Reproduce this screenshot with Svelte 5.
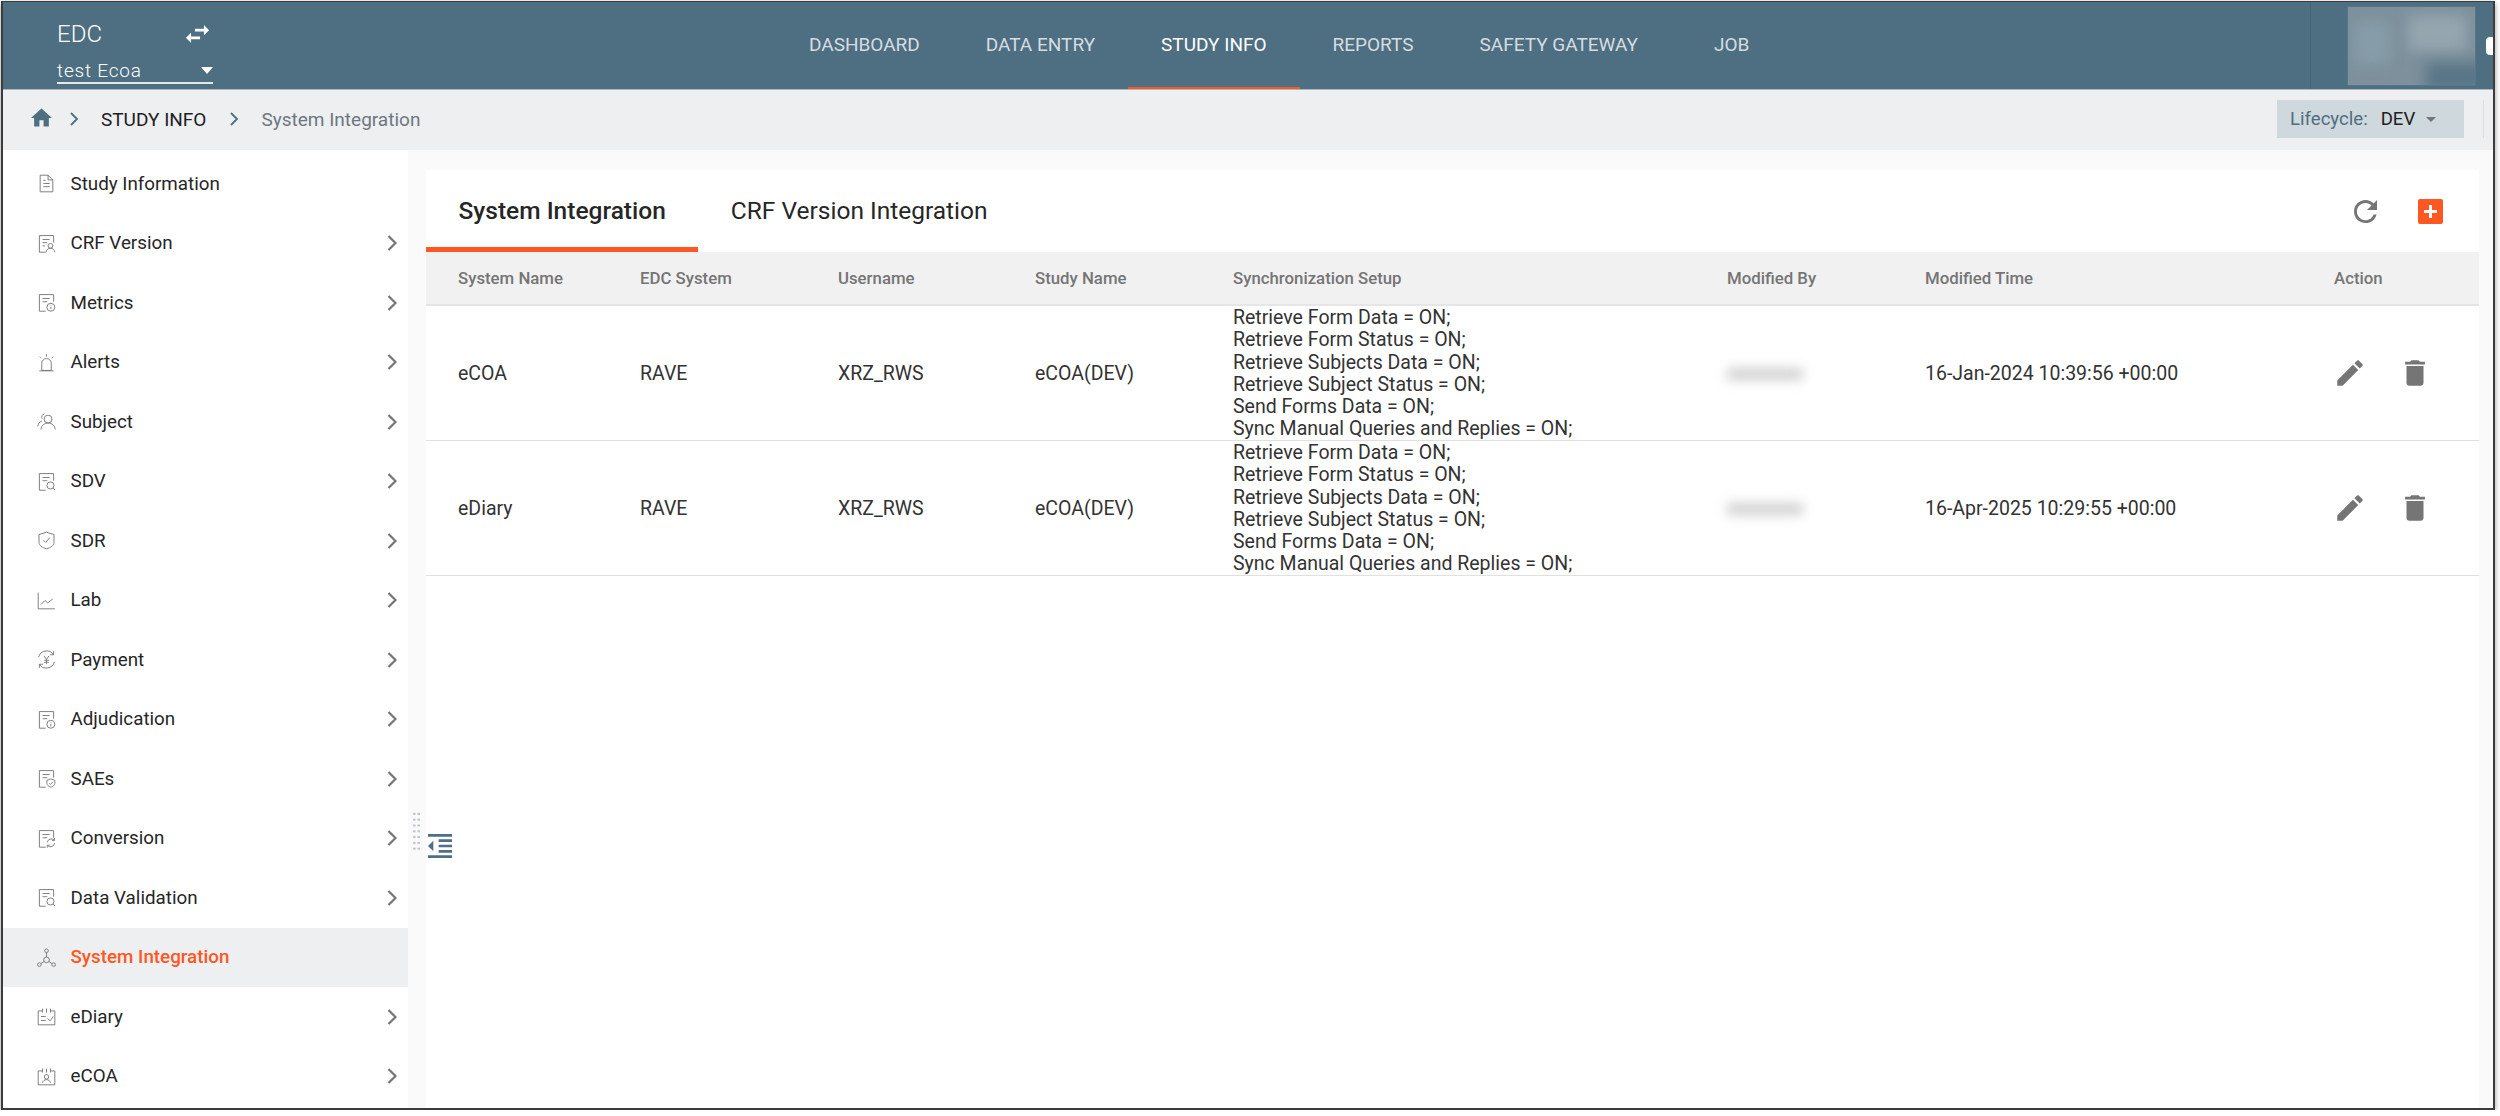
<script lang="ts">
	const navItems = ['Dashboard', 'Data Entry', 'Study Info', 'Reports', 'Safety Gateway', 'Job'];

	const menu = [
		{ label: 'Study Information', icon: 'doc', arrow: false },
		{ label: 'CRF Version', icon: 'crf', arrow: true },
		{ label: 'Metrics', icon: 'metrics', arrow: true },
		{ label: 'Alerts', icon: 'alerts', arrow: true },
		{ label: 'Subject', icon: 'subject', arrow: true },
		{ label: 'SDV', icon: 'search', arrow: true },
		{ label: 'SDR', icon: 'shield', arrow: true },
		{ label: 'Lab', icon: 'lab', arrow: true },
		{ label: 'Payment', icon: 'payment', arrow: true },
		{ label: 'Adjudication', icon: 'metrics', arrow: true },
		{ label: 'SAEs', icon: 'saes', arrow: true },
		{ label: 'Conversion', icon: 'conversion', arrow: true },
		{ label: 'Data Validation', icon: 'search', arrow: true },
		{ label: 'System Integration', icon: 'nodes', arrow: false, active: true },
		{ label: 'eDiary', icon: 'diary', arrow: true },
		{ label: 'eCOA', icon: 'ecoa', arrow: true }
	];

	const columns = [
		'System Name',
		'EDC System',
		'Username',
		'Study Name',
		'Synchronization Setup',
		'Modified By',
		'Modified Time',
		'Action'
	];

	const syncLines = [
		'Retrieve Form Data = ON;',
		'Retrieve Form Status = ON;',
		'Retrieve Subjects Data = ON;',
		'Retrieve Subject Status = ON;',
		'Send Forms Data = ON;',
		'Sync Manual Queries and Replies = ON;'
	];

	const rows = [
		{ name: 'eCOA', edc: 'RAVE', user: 'XRZ_RWS', study: 'eCOA(DEV)', time: '16-Jan-2024 10:39:56 +00:00' },
		{ name: 'eDiary', edc: 'RAVE', user: 'XRZ_RWS', study: 'eCOA(DEV)', time: '16-Apr-2025 10:29:55 +00:00' }
	];

	const docIcons = ['crf', 'metrics', 'search', 'saes', 'conversion'];
</script>

<div class="window">
	<header class="topbar">
		<div class="study">
			<div class="study-top">
				<span class="edc">EDC</span>
				<svg class="swap" viewBox="3 5 18 14" aria-hidden="true">
					<path d="M6.99 11L3 15l3.99 4v-3H14v-2H6.99v-3zM21 9l-3.99-4v3H10v2h7.01v3L21 9z" />
				</svg>
			</div>
			<div class="study-select">
				<span>test Ecoa</span>
				<i class="select-caret"></i>
			</div>
		</div>
		<nav class="nav">
			{#each navItems as item}
				<span class="nav-item" class:current={item === 'Study Info'} class:last={item === 'Job'}>{item}</span>
			{/each}
		</nav>
		<div class="user">
			<div class="user-blur"><div class="blob b1"></div><div class="blob b2"></div><div class="blob b3"></div></div>
			<div class="user-edge"></div>
		</div>
	</header>

	<div class="crumbs">
		<svg class="home" viewBox="2 3 20 17" aria-hidden="true"><path d="M10 20v-6h4v6h5v-8h3L12 3 2 12h3v8z" /></svg>
		<svg class="crumb-arrow" viewBox="0 0 10 14" aria-hidden="true"><path d="M2 1l6 6-6 6" /></svg>
		<span class="crumb">STUDY INFO</span>
		<svg class="crumb-arrow" viewBox="0 0 10 14" aria-hidden="true"><path d="M2 1l6 6-6 6" /></svg>
		<span class="crumb muted">System Integration</span>
		<div class="lifecycle">
			<span class="lc-label">Lifecycle:</span>
			<span class="lc-value">DEV</span>
			<i class="lc-caret"></i>
		</div>
		<div class="crumb-divider"></div>
	</div>

	<div class="body">
		<aside class="sidebar">
			{#each menu as item}
				<div class="menu-item" class:active={item.active}>
					<svg class="menu-icon" viewBox="0 0 24 24" aria-hidden="true">
						{#if docIcons.includes(item.icon)}
							<path d="M21 11V2H3v21h8M7 7h9M7 11h6" />
						{/if}
						{#if item.icon === 'doc'}
							<path d="M4 1.500h10l6 6v15H4zM14 1.500v6h6M8 12h8M8 16h8M8 8h3" />
						{:else if item.icon === 'crf'}
							<circle cx="17" cy="15" r="3" />
							<path d="M11.500 23c.5-3 2.500-5 5.500-5s5 2 5.500 5M7 15h3" />
						{:else if item.icon === 'metrics'}
							<circle cx="17.500" cy="18" r="5" />
							<path d="M17.500 15.500v.8M17.500 17.500v3" />
						{:else if item.icon === 'alerts'}
							<path d="M6 22V13a6 6 0 0 1 12 0v9zM3 22.500h18M12 1.500v3M3.500 4.500l2 2M20.500 4.500l-2 2" />
						{:else if item.icon === 'subject'}
							<circle cx="14" cy="9" r="5" />
							<path d="M5 22c.5-5 4-8 9-8s8.500 3 9 8M9.500 2.500a4 4 0 0 0-3 6M6 11.500c-3 1-4.500 3.500-5 6.500" />
						{:else if item.icon === 'search'}
							<circle cx="17" cy="17" r="4.500" />
							<path d="M20.500 20.500l2.500 2.500" />
						{:else if item.icon === 'shield'}
							<path d="M12 1.500l9.500 3v10c0 3.500-4 6.500-9.500 8-5.500-1.500-9.500-4.500-9.500-8v-10z" />
							<path d="M8 11.500l3 3 5-6" />
						{:else if item.icon === 'lab'}
							<path d="M1.500 2v20.500h21M5 17l5-5 3.500 3L20 10" />
						{:else if item.icon === 'payment'}
							<path d="M2 9a10.500 10.500 0 0 1 19-3M22 15a10.500 10.500 0 0 1-19 3M21 1.500V6h-4.500M3 22.500V18h4.500" />
							<path d="M9 7.500l3 4.500 3-4.500M12 12v5.500M9 13h6M9 15.500h6" />
						{:else if item.icon === 'saes'}
							<path d="M17.500 12.500l5 1.800v4c0 2-2.200 3.700-5 4.700-2.800-1-5-2.700-5-4.700v-4z" />
							<path d="M15.500 18l1.500 1.500 2.800-3" />
						{:else if item.icon === 'conversion'}
							<path d="M13 17a5 5 0 0 1 8.500-3M22 18a5 5 0 0 1-8.500 3M22 11.500v3h-3M13 23.500v-3h3" />
						{:else if item.icon === 'nodes'}
							<circle cx="12" cy="3.500" r="2.300" />
							<circle cx="12" cy="15" r="3.600" />
							<circle cx="3" cy="21" r="2.300" />
							<circle cx="21" cy="21" r="2.300" />
							<path d="M12 5.800v5.600M9 17l-4 2.800M15 17l4 2.800" />
						{:else if item.icon === 'diary'}
							<path d="M7 5H1.500v17.500h21V5H17M7 2v5M12 2v5M17 2v5M5 12h6M5 17h6M13.500 14.500l3 3 4-5.500" />
						{:else if item.icon === 'ecoa'}
							<path d="M7 5H1.500v17.500h21V5H17M7 2v5M12 2v5M17 2v5" />
							<circle cx="12" cy="12.500" r="2.800" />
							<path d="M7 20c.5-2.700 2.500-4 5-4s4.500 1.300 5 4" />
						{/if}
					</svg>
					<span class="menu-label">{item.label}</span>
					{#if item.arrow}
						<svg class="menu-arrow" viewBox="0 0 10 16" aria-hidden="true"><path d="M1.500 1l7 7-7 7" /></svg>
					{/if}
				</div>
			{/each}
		</aside>

		<main class="content">
			<div class="card">
				<div class="tabs">
					<span class="tab on">System Integration</span>
					<span class="tab">CRF Version Integration</span>
					<div class="tab-actions">
						<svg class="refresh" viewBox="4 4 16 16" aria-hidden="true">
							<path d="M17.65 6.35C16.2 4.9 14.21 4 12 4c-4.42 0-7.99 3.58-7.99 8s3.57 8 7.990 8c3.730 0 6.840-2.550 7.730-6h-2.080c-.820 2.330-3.040 4-5.650 4-3.310 0-6-2.690-6-6s2.690-6 6-6c1.660 0 3.140.690 4.220 1.780L13 11h7V4l-2.350 2.350z" />
						</svg>
						<span class="add"><i></i></span>
					</div>
				</div>

				<div class="grid head">
					{#each columns as col}
						<div class="cell">{col}</div>
					{/each}
				</div>

				{#each rows as row}
					<div class="grid row">
						<div class="cell">{row.name}</div>
						<div class="cell">{row.edc}</div>
						<div class="cell">{row.user}</div>
						<div class="cell">{row.study}</div>
						<div class="cell sync">
							{#each syncLines as line}
								<div>{line}</div>
							{/each}
						</div>
						<div class="cell"><span class="name-blur"></span></div>
						<div class="cell">{row.time}</div>
						<div class="cell actions">
							<svg viewBox="0 0 24 24" aria-hidden="true">
								<path d="M3 17.250V21h3.750L17.810 9.940l-3.750-3.750L3 17.250zM20.710 7.040c.390-.390.390-1.020 0-1.410l-2.340-2.340c-.390-.390-1.020-.390-1.410 0l-1.830 1.830 3.750 3.750 1.830-1.830z" />
							</svg>
							<svg viewBox="0 0 24 24" aria-hidden="true">
								<path d="M6 19c0 1.100.900 2 2 2h8c1.100 0 2-.900 2-2V7H6v12zM19 4h-3.500l-1-1h-5l-1 1H5v2h14V4z" />
							</svg>
						</div>
					</div>
				{/each}
			</div>
		</main>

		<div class="splitter"></div>
		<svg class="collapse" viewBox="0 0 24 24" aria-hidden="true">
			<path d="M11 17h10v-2H11v2zm-8-5l4 4V8l-4 4zm0 9h18v-2H3v2zM3 3v2h18V3H3zm8 6h10V7H11v2zm0 4h10v-2H11v2z" />
		</svg>
	</div>
</div>

<style>
	:global(body) {
		margin: 0;
		background: #fff;
	}
	.window {
		box-sizing: border-box;
		width: 2494px;
		height: 1108.500px;
		margin: 1px 0 0 1px;
		border: 2px solid #3c3c3c;
		border-width: 1.500px 2.500px 2px 2px;
		box-shadow: 0 2px 6px rgba(0, 0, 0, 0.4);
		display: flex;
		flex-direction: column;
		overflow: hidden;
		font-family: Roboto, 'Liberation Sans', sans-serif;
		font-size: 19px;
		color: #212121;
	}

	.topbar {
		flex: 0 0 87px;
		background: #4e6e82;
		border-bottom: 1px solid #a9b9c3;
		display: flex;
		align-items: stretch;
		color: #fff;
	}
	.study {
		flex: none;
		width: 156px;
		margin-left: 54px;
	}
	.study-top {
		display: flex;
		align-items: center;
		justify-content: space-between;
		height: 24px;
		margin-top: 20px;
		padding-right: 3px;
	}
	.edc {
		font-size: 24px;
		font-weight: 300;
	}
	.swap {
		width: 25px;
		height: 18px;
		fill: #fff;
	}
	.study-select {
		margin-top: 13px;
		display: flex;
		align-items: center;
		justify-content: space-between;
		height: 23px;
		border-bottom: 2px solid #e4e9ec;
		font-size: 19px;
		font-weight: 300;
		letter-spacing: 0.8px;
	}
	.select-caret {
		border: 6px solid transparent;
		border-top: 7px solid #fff;
		border-bottom: 0;
	}
	.nav {
		display: flex;
		margin-left: 563px;
	}
	.nav-item {
		display: flex;
		align-items: center;
		padding: 0 33px;
		text-transform: uppercase;
		font-size: 19px;
		color: #d5dde1;
		box-sizing: border-box;
		border-bottom: 2px solid transparent;
		white-space: nowrap;
	}
	.nav-item.current {
		color: #fff;
		border-bottom-color: #ff5722;
	}
	.nav-item.last {
		margin-left: 10px;
	}
	.user {
		flex: none;
		margin-left: auto;
		width: 183px;
		border-left: 1px solid #45647a;
		box-sizing: border-box;
		display: flex;
		align-items: flex-start;
		justify-content: space-between;
	}
	.user-blur {
		position: relative;
		width: 127px;
		height: 78px;
		margin: 5px 0 0 37px;
		background: #7d909c;
		overflow: hidden;
		box-shadow: 0 0 1px #8ea0ab;
	}
	.blob {
		position: absolute;
		filter: blur(7px);
	}
	.b1 {
		left: 60px;
		top: 8px;
		width: 58px;
		height: 36px;
		background: #96a6af;
	}
	.b2 {
		left: 78px;
		top: 56px;
		width: 60px;
		height: 28px;
		background: #587587;
	}
	.b3 {
		left: 6px;
		top: 14px;
		width: 36px;
		height: 44px;
		background: #869ca8;
	}
	.user-edge {
		width: 7px;
		height: 18px;
		margin-top: 35px;
		background: #fff;
		border-radius: 4px 0 0 4px;
	}

	.crumbs {
		flex: 0 0 60px;
		box-sizing: border-box;
		padding: 0 0 2px 28px;
		background: #eeeff1;
		display: flex;
		align-items: center;
		position: relative;
	}
	.home {
		width: 21px;
		height: 19px;
		fill: #4e6e82;
		margin-top: -3px;
	}
	.crumb-arrow {
		width: 10px;
		height: 14px;
		fill: none;
		stroke: #4e6e82;
		stroke-width: 1.800;
		margin: 0 22px 0 17px;
	}
	.crumb {
		color: #212121;
	}
	.crumb + .crumb-arrow {
		margin-left: 23px;
	}
	.crumb.muted {
		color: #6c7780;
	}
	.lifecycle {
		margin-left: auto;
		margin-right: 29px;
		width: 187px;
		height: 38px;
		box-sizing: border-box;
		padding-left: 13px;
		background: #cfd8dc;
		display: flex;
		align-items: center;
		font-size: 18.600px;
	}
	.lc-label {
		color: #4e6e82;
	}
	.lc-value {
		margin-left: 13px;
	}
	.lc-caret {
		margin-left: 11px;
		border: 5px solid transparent;
		border-top: 5px solid #757575;
		border-bottom: 0;
	}
	.crumb-divider {
		position: absolute;
		right: 9px;
		top: 10px;
		height: 38px;
		width: 1px;
		background: #dcdfe2;
	}

	.body {
		flex: 1;
		min-height: 0;
		display: flex;
		position: relative;
	}
	.sidebar {
		width: 405px;
		flex: none;
		padding-top: 4px;
		background: #fff;
	}
	.menu-item {
		height: 59.530px;
		display: flex;
		align-items: center;
		padding-left: 34px;
		padding-right: 11px;
		box-sizing: border-box;
		white-space: nowrap;
	}
	.menu-item.active {
		background: #eeeff1;
	}
	.menu-item.active .menu-label {
		color: #ff5722;
		font-weight: 500;
	}
	.menu-icon {
		width: 19px;
		height: 19px;
		fill: none;
		stroke: #7a7a7a;
		stroke-width: 1.200;
		margin-right: 14.500px;
	}
	.menu-label {
		font-size: 18.800px;
		color: #262626;
	}
	.menu-arrow {
		width: 10px;
		height: 16px;
		margin-left: auto;
		fill: none;
		stroke: #757575;
		stroke-width: 2.200;
	}

	.content {
		flex: 1;
		background: #fafafa;
		padding: 20px 14px 0 18px;
		display: flex;
		min-width: 0;
	}
	.card {
		flex: 1;
		background: #fff;
		min-width: 0;
	}
	.tabs {
		height: 82px;
		display: flex;
		align-items: stretch;
	}
	.tab {
		box-sizing: border-box;
		display: flex;
		align-items: center;
		padding: 3px 32.500px 0;
		font-size: 24.500px;
		color: #262626;
		border-bottom: 5px solid transparent;
	}
	.tab.on {
		font-weight: 500;
		border-bottom-color: #ff5722;
	}
	.tab-actions {
		margin-left: auto;
		display: flex;
		align-items: center;
		padding-right: 36px;
		gap: 41px;
	}
	.refresh {
		width: 23px;
		height: 23px;
		fill: #757575;
	}
	.add {
		width: 25px;
		height: 25px;
		border-radius: 2px;
		background: #ff5722;
		position: relative;
	}
	.add i::before,
	.add i::after {
		content: '';
		position: absolute;
		background: #fff;
		left: 6px;
		right: 6px;
		top: 11px;
		height: 3px;
	}
	.add i::after {
		left: 11px;
		right: 11px;
		top: 6px;
		height: 13px;
		width: 3px;
	}

	.grid {
		display: grid;
		grid-template-columns: 182px 198px 197px 198px 494px 198px 409px 176px;
		align-items: center;
		box-sizing: border-box;
	}
	.cell {
		padding-left: 32px;
	}
	.head {
		height: 54px;
		background: #f1f1f1;
		border-bottom: 2px solid #e6e6e6;
		font-size: 16.800px;
		font-weight: 500;
		color: #757575;
	}
	.row {
		height: 135px;
		border-bottom: 1px solid #e0e0e0;
		font-size: 19.500px;
		color: #333;
	}
	.sync {
		line-height: 22.300px;
		white-space: nowrap;
		padding-top: 1px;
	}
	.name-blur {
		display: block;
		width: 76px;
		height: 12px;
		margin-top: 2px;
		background: #d0d0d0;
		filter: blur(6px);
	}
	.actions {
		display: flex;
		gap: 31px;
		padding-left: 31px;
		margin-bottom: 1px;
	}
	.actions svg {
		width: 34px;
		height: 34px;
		fill: #757575;
	}

	.splitter {
		position: absolute;
		left: 409px;
		top: 661px;
		width: 8px;
		height: 41px;
		background-image: radial-gradient(circle, #bfc8cd 1.300px, transparent 1.500px);
		background-size: 4.500px 5.800px;
	}
	.collapse {
		position: absolute;
		left: 421px;
		top: 680px;
		width: 32px;
		height: 32px;
		fill: #4e7086;
	}
</style>
